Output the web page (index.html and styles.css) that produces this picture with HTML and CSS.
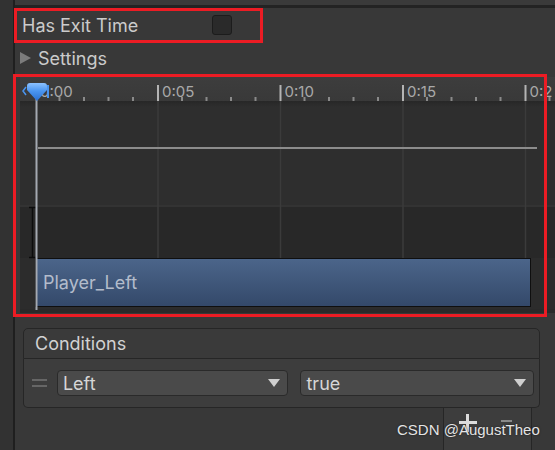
FILE: index.html
```html
<!DOCTYPE html>
<html lang="en">
<head>
  <meta charset="UTF-8">
  <title>Transition Inspector</title>
  <link rel="stylesheet" href="styles.css">
</head>
<body>
  <div class="gutter"></div>

  <div class="main">
    <div class="topbar"></div>

    <div class="exit-row">
      <span class="exit-label">Has Exit Time</span>
      <span class="checkbox"></span>
    </div>

    <div class="settings-row">
      <span class="foldout"></span>
      <span>Settings</span>
    </div>

    <div class="timeline-wrap">
      <div class="timeline">
        <div class="ruler"></div>
        <div class="curve-area"></div>
        <div class="lower-band"></div>
        <div class="clip-row">
          <div class="clip">Player_Left</div>
        </div>
        <div class="clip-foot"></div>

        <svg class="timeline-overlay" width="535" height="236" viewBox="0 0 535 236">
          <defs>
            <linearGradient id="marker" x1="0" y1="0" x2="0" y2="1">
              <stop offset="0" stop-color="#8cc2ff"/>
              <stop offset="0.45" stop-color="#4a95f0"/>
              <stop offset="1" stop-color="#2a6fd0"/>
            </linearGradient>
          </defs>
          <!-- minor ticks -->
          <g stroke="#8a8a8a" stroke-width="2">
            <line x1="39.5" y1="20" x2="39.5" y2="24"/>
            <line x1="64" y1="20" x2="64" y2="24"/>
            <line x1="88.5" y1="20" x2="88.5" y2="24"/>
            <line x1="113" y1="20" x2="113" y2="24"/>
            <line x1="162" y1="20" x2="162" y2="24"/>
            <line x1="186.5" y1="20" x2="186.5" y2="24"/>
            <line x1="211" y1="20" x2="211" y2="24"/>
            <line x1="235.5" y1="20" x2="235.5" y2="24"/>
            <line x1="284.5" y1="20" x2="284.5" y2="24"/>
            <line x1="309" y1="20" x2="309" y2="24"/>
            <line x1="333.5" y1="20" x2="333.5" y2="24"/>
            <line x1="358" y1="20" x2="358" y2="24"/>
            <line x1="407" y1="20" x2="407" y2="24"/>
            <line x1="431.5" y1="20" x2="431.5" y2="24"/>
            <line x1="456" y1="20" x2="456" y2="24"/>
            <line x1="480.5" y1="20" x2="480.5" y2="24"/>
            <line x1="529.5" y1="20" x2="529.5" y2="24"/>
          </g>
          <!-- major ticks -->
          <g stroke="#b4b4b4" stroke-width="2">
            <line x1="138" y1="8" x2="138" y2="24"/>
            <line x1="260.5" y1="8" x2="260.5" y2="24"/>
            <line x1="383" y1="8" x2="383" y2="24"/>
            <line x1="505.5" y1="8" x2="505.5" y2="24"/>
          </g>
          <g class="ruler-label" fill="#a9a9a9">
            <text x="20" y="20">0:00</text>
            <text x="142" y="20">0:05</text>
            <text x="264.5" y="20">0:10</text>
            <text x="387" y="20">0:15</text>
            <text x="509.5" y="20">0:2</text>
          </g>
          <!-- grid -->
          <g stroke="#3b3b3b" stroke-width="1.5">
            <line x1="138" y1="24" x2="138" y2="181"/>
            <line x1="260.5" y1="24" x2="260.5" y2="181"/>
            <line x1="383" y1="24" x2="383" y2="181"/>
            <line x1="505.5" y1="24" x2="505.5" y2="181"/>
          </g>
          <!-- curve -->
          <line x1="18" y1="71" x2="517" y2="71" stroke="#8c8c8c" stroke-width="2"/>
          <!-- start bracket -->
          <g stroke="#0c0c0c" stroke-width="1.5" fill="none">
            <line x1="12.5" y1="130" x2="12.5" y2="181"/>
            <line x1="9" y1="130.5" x2="16" y2="130.5"/>
            <line x1="9" y1="180.5" x2="16" y2="180.5"/>
          </g>
          <!-- playhead -->
          <line x1="16.5" y1="20" x2="16.5" y2="233" stroke="#a4a9b1" stroke-width="2"/>
          <path d="M6 10 L3 14 L6 18" stroke="#4a95f0" stroke-width="1.5" fill="none"/>
          <path d="M7 9 Q7 6 10 6 H24 Q27 6 27 9 V13 L17 24 L7 13 Z" fill="url(#marker)"/>
          <rect x="27" y="8" width="2" height="13" fill="#4a95f0"/>
        </svg>
      </div>
    </div>

    <div class="conditions">
      <div class="conditions-head">Conditions</div>
      <div class="conditions-body">
        <span class="handle"></span>
        <div class="dropdown dropdown-param">
          <span>Left</span>
          <span class="arrow"></span>
        </div>
        <div class="dropdown dropdown-value">
          <span>true</span>
          <span class="arrow"></span>
        </div>
      </div>
      <div class="conditions-foot">
        <span class="plus"></span>
        <span class="minus"></span>
      </div>
    </div>
  </div>

  <div class="mark mark-exit"></div>
  <div class="mark mark-timeline"></div>
  <div class="watermark">CSDN @AugustTheo</div>
</body>
</html>
```

FILE: styles.css
```css
body {
  margin: 0;
  width: 555px;
  height: 450px;
  overflow: hidden;
  display: flex;
  position: relative;
  background-color: #383838;
  font-family: Inter, "Noto Sans", sans-serif;
  font-size: 18px;
  color: #cbcbcb;
}

.gutter {
  width: 13px;
  flex: none;
  background-color: #323232;
  border-right: 2px solid #1f1f1f;
}

.main {
  flex: 1;
  min-width: 0;
}

.topbar {
  height: 5px;
  background-color: #3a3a3a;
  border-bottom: 3px solid #232323;
}

.exit-row {
  height: 34px;
  display: flex;
  align-items: center;
  padding-left: 7px;
}

.exit-label {
  width: 190px;
}

.checkbox {
  width: 18px;
  height: 18px;
  background-color: #2a2a2a;
  border: 1px solid #1c1c1c;
  border-radius: 3px;
}

.settings-row {
  height: 32px;
  display: flex;
  align-items: center;
  padding-left: 5px;
  gap: 7px;
}

.foldout {
  width: 0;
  height: 0;
  border-top: 6px solid transparent;
  border-bottom: 6px solid transparent;
  border-left: 11px solid #7c7c7c;
}

.timeline-wrap {
  padding: 3px 0 3px 5px;
}

.timeline {
  position: relative;
  width: 535px;
  height: 236px;
  overflow: hidden;
  background-color: #2c2c2c;
}

.ruler {
  height: 24px;
  background: linear-gradient(#3d3d3d, #393939);
}

.curve-area {
  height: 104px;
  background: linear-gradient(#272727, #2e2e2e 6px);
}

.lower-band {
  height: 51px;
  background-color: #282828;
  border-top: 2px solid #333333;
}

.clip-row {
  height: 51px;
  padding-left: 15px;
  background-color: #2c2c2c;
}

.clip {
  width: 496px;
  height: 49px;
  display: flex;
  align-items: center;
  padding-left: 7px;
  box-sizing: border-box;
  border: 1px solid #0f0f0f;
  background: linear-gradient(#4b658a, #34496a);
  color: #b3bccb;
}

.clip-foot {
  height: 4px;
  background-color: #2a2a2a;
}

.timeline-overlay {
  position: absolute;
  left: 0;
  top: 0;
}

.ruler-label {
  font-family: Inter, "Noto Sans", sans-serif;
  font-size: 15px;
}

.conditions {
  margin: 12px 0 0 8px;
  width: 517px;
}

.conditions-head {
  height: 29px;
  display: flex;
  align-items: center;
  padding-left: 11px;
  background-color: #3a3a3a;
  border: 1px solid #262626;
  border-radius: 5px 5px 0 0;
  color: #d2d2d2;
}

.conditions-body {
  height: 48px;
  display: flex;
  align-items: center;
  padding: 0 5px 0 8px;
  gap: 12px;
  background-color: #3d3d3d;
  border: 1px solid #262626;
  border-top: none;
  border-radius: 0 0 5px 5px;
}

.handle {
  width: 15px;
  height: 4px;
  border-top: 2px solid #666666;
  border-bottom: 2px solid #666666;
  margin-right: -2px;
}

.dropdown {
  height: 26px;
  box-sizing: border-box;
  display: flex;
  align-items: center;
  justify-content: space-between;
  padding: 0 7px 0 5px;
  background-color: #4a4a4a;
  border: 1px solid #2a2a2a;
  border-radius: 4px;
  color: #d6d6d6;
}

.dropdown-param {
  width: 233px;
}

.dropdown-value {
  width: 235px;
}

.arrow {
  width: 0;
  height: 0;
  border-left: 6px solid transparent;
  border-right: 6px solid transparent;
  border-top: 8px solid #cfcfcf;
}

.conditions-foot {
  margin-left: 420px;
  width: 89px;
  height: 43px;
  display: flex;
  align-items: flex-start;
  padding: 6px 0 0 15px;
  box-sizing: border-box;
  gap: 24px;
  background-color: #3d3d3d;
  border: 1px solid #262626;
  border-top: none;
}

.plus {
  position: relative;
  width: 18px;
  height: 18px;
}

.plus::before,
.plus::after {
  content: "";
  position: absolute;
  background-color: #dcdcdc;
}

.plus::before {
  left: 0;
  top: 7px;
  width: 18px;
  height: 3px;
}

.plus::after {
  left: 7px;
  top: 0;
  width: 3px;
  height: 18px;
}

.minus {
  width: 11px;
  height: 2px;
  margin-top: 6px;
  background-color: #8a8a8a;
}

.mark {
  position: absolute;
  border: 3px solid #ec1c24;
  box-sizing: border-box;
}

.mark-exit {
  left: 14px;
  top: 8px;
  width: 249px;
  height: 35px;
}

.mark-timeline {
  left: 13px;
  top: 74px;
  width: 534px;
  height: 243px;
}

.watermark {
  position: absolute;
  left: 397px;
  top: 421px;
  font-family: "Liberation Sans", Arial, sans-serif;
  font-size: 15px;
  color: #e4e4e4;
  text-shadow: 0 0 2px #1a1a1a;
}
```
